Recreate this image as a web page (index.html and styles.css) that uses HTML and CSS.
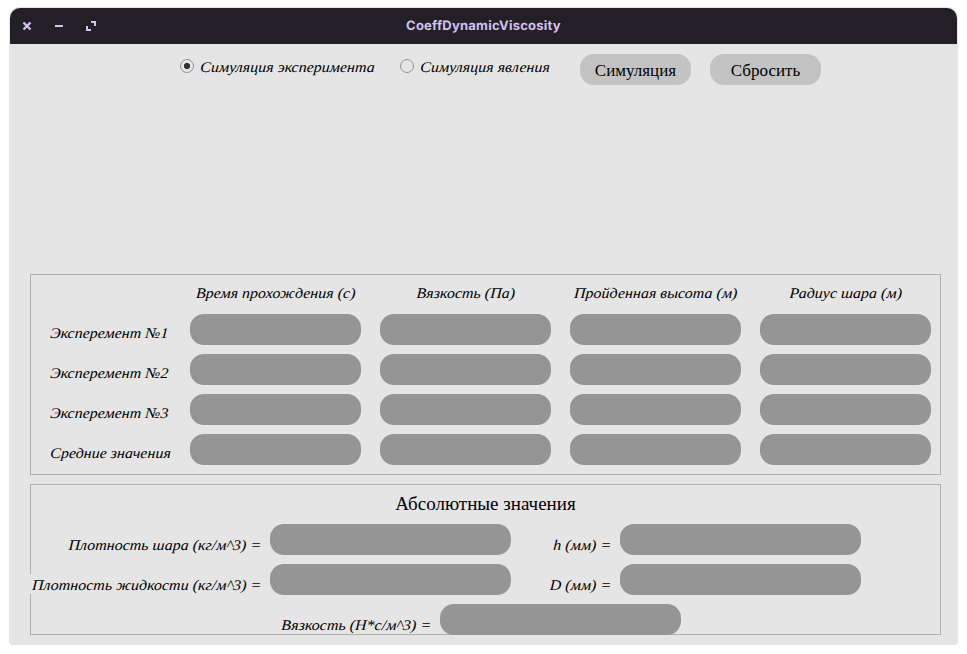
FILE: index.html
```html
<!DOCTYPE html>
<html lang="ru">
<head>
<meta charset="utf-8">
<title>CoeffDynamicViscosity</title>
<link rel="stylesheet" href="styles.css">
</head>
<body>
<div class="window">
  <header class="titlebar">
    <div class="controls">
      <svg width="10" height="10" viewBox="0 0 10 10"><path d="M1.5 1.5L8.5 8.5M8.5 1.5L1.5 8.5" style="stroke-width:2.3"/></svg>
      <svg width="10" height="10" viewBox="0 0 10 10"><path d="M1 5H9"/></svg>
      <svg width="10" height="10" viewBox="0 0 10 10"><path d="M5 1H9V5M1 5V9H5"/></svg>
    </div>
    <h1>CoeffDynamicViscosity</h1>
  </header>
  <main>
    <div class="toolbar">
      <label class="option exp"><i class="radio on"></i><em>Симуляция эксперимента</em></label>
      <label class="option phen"><i class="radio"></i><em>Симуляция явления</em></label>
      <button class="sim">Симуляция</button>
      <button>Сбросить</button>
    </div>
    <section class="box results">
      <span></span><b><em>Время прохождения (с)</em></b><b><em>Вязкость (Па)</em></b><b><em>Пройденная высота (м)</em></b><b><em>Радиус шара (м)</em></b>
      <span><em>Эксперемент №1</em></span><i class="field"></i><i class="field"></i><i class="field"></i><i class="field"></i>
      <span><em>Эксперемент №2</em></span><i class="field"></i><i class="field"></i><i class="field"></i><i class="field"></i>
      <span><em>Эксперемент №3</em></span><i class="field"></i><i class="field"></i><i class="field"></i><i class="field"></i>
      <span><em>Средние значения</em></span><i class="field"></i><i class="field"></i><i class="field"></i><i class="field"></i>
    </section>
    <section class="box absolute-values">
      <h2>Абсолютные значения</h2>
      <div class="row"><span><em>Плотность шара (кг/м^3) =</em></span><i class="field"></i><span class="short"><em>h (мм) =</em></span><i class="field"></i></div>
      <div class="row"><span class="wide"><em>Плотность жидкости (кг/м^3) =</em></span><i class="field"></i><span class="short"><em>D (мм) =</em></span><i class="field"></i></div>
      <div class="row"><span class="long"><em>Вязкость (Н*с/м^3) =</em></span><i class="field"></i></div>
    </section>
  </main>
</div>
</body>
</html>
```
FILE: styles.css
```css
* { box-sizing: border-box; }
body { margin: 0; padding: 7px 9px 9px; background: #fff; font-family: "Liberation Serif", serif; color: #000; }
.window { width: 949px; height: 638px; padding: 1px; background: #e5e5e5; border-radius: 11px 11px 4px 4px; }
.titlebar { height: 36px; border-radius: 10px 10px 0 0; background: #231f26; display: grid; grid-template-columns: 200px 1fr 200px; align-items: center; }
.controls { display: flex; gap: 22px; padding-left: 12px; }
.controls svg { display: block; fill: none; stroke: #d5c0f0; stroke-width: 2; }
h1 { margin: 0; padding-bottom: 1px; font: bold 13px/20px Inter, sans-serif; letter-spacing: .23px; color: #d5c0f0; text-align: center; text-rendering: geometricPrecision; }
main { padding: 10px 16px 0 20px; }
.toolbar { height: 220px; display: flex; align-items: flex-start; padding-left: 150px; }
.option { display: flex; align-items: center; gap: 6px; height: 24px; }
.exp { width: 220px; }
.phen { width: 180px; }
.radio { width: 14px; height: 14px; border: 1px solid #929292; border-radius: 50%; }
.on { background: radial-gradient(circle, #333 2.8px, transparent 3.5px); }
button { width: 111px; height: 31px; margin: 0 19px 0 0; padding: 2px 0 0; border: 0; border-radius: 14px; background: #c3c3c3; font: 17px "Liberation Serif", serif; color: #000; }
.box { width: 911px; border: 1px solid #afafaf; }
.results { height: 201px; display: grid; grid-template-columns: 140px repeat(4, 171px); grid-template-rows: 30px repeat(4, 31px); gap: 9px 19px; }
/* Slightly flattened, steeper italics for every label. */
em { display: block; font-size: 16px; line-height: 20px; font-weight: normal; font-style: italic; white-space: nowrap; transform-origin: 50% 15px; transform: scaleY(.92) skewX(-3deg); }
.option em { padding-top: 2px; transform-origin: 50% 17px; }
.results span { height: 27px; padding: 9px 0 0 19px; overflow: hidden; }
.results b { align-self: start; height: 18px; margin-top: 8px; text-align: center; overflow: hidden; }
.field { display: block; border-radius: 14px; background: #959595; }
.absolute-values { height: 151px; margin-top: 9px; }
h2 { margin: 0; height: 39px; font-weight: normal; font-size: 19px; line-height: 38px; text-align: center; }
.row { display: flex; height: 31px; margin: 0 0 9px -1px; }
.row .field { width: 241px; height: 31px; }
.row span { width: 240px; height: 20px; margin-top: 10px; padding: 1px 9px 0 0; text-align: right; }
.row .wide { background: #e5e5e5; }
.row .short { width: 109px; }
.row .long { width: 410px; }
```
